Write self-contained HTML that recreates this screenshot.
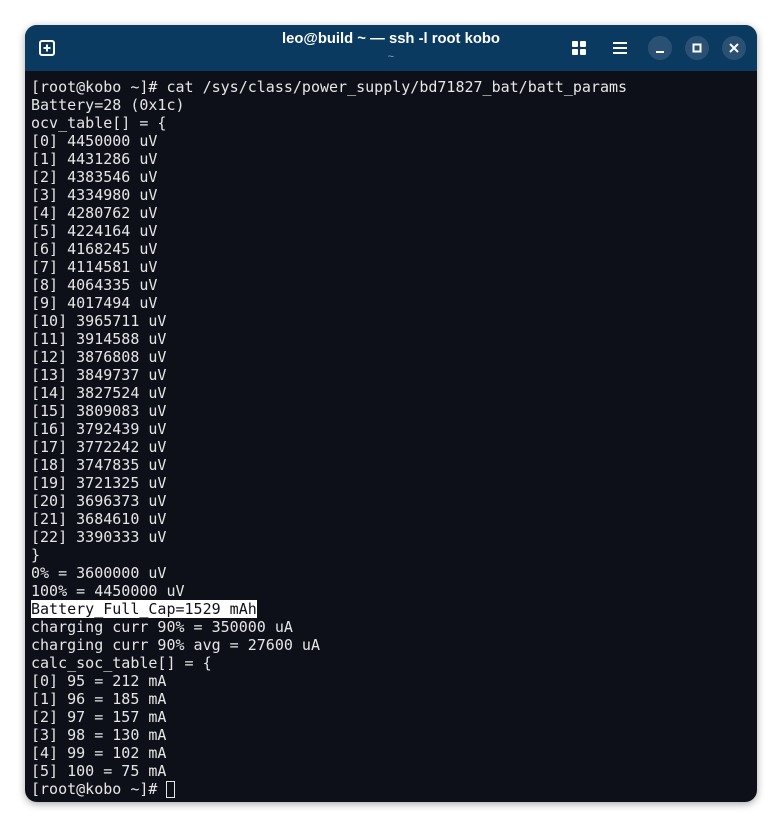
<!DOCTYPE html>
<html><head><style>
body{margin:0;width:782px;height:827px;background:#fff;position:relative;overflow:hidden}
.win{position:absolute;left:25px;top:25px;width:732px;height:777px;border-radius:12px;overflow:hidden;background:#0e1019;box-shadow:0 2px 8px rgba(0,0,0,.35)}
.tb{position:absolute;left:0;top:0;width:732px;height:46px;background:#0b3a61}
.title{position:absolute;left:0;right:0;top:6px;text-align:center;color:#fff;font:bold 14.8px "Liberation Sans",sans-serif}
.sub{position:absolute;left:0;right:0;top:26px;text-align:center;color:#8aa3bb;font:11px "Liberation Sans",sans-serif}
pre{position:absolute;left:6px;top:53px;margin:0;font:15px/18px "DejaVu Sans Mono",monospace;color:#e6e6e6}
.hl{background:#fff;color:#0e1019}
.cur{display:inline-block;width:9px;height:17px;border:1px solid #e6e6e6;box-sizing:border-box;vertical-align:-4px}
.cb{position:absolute;top:11px;width:24px;height:24px;border-radius:50%;background:#2a5174}
</style></head><body>
<div class="win">
<div class="tb">
<svg style="position:absolute;left:14px;top:15px" width="16" height="16"><rect x="1" y="1" width="14" height="14" rx="2" fill="none" stroke="#fff" stroke-width="2"/><path d="M8 4.5v7M4.5 8h7" stroke="#fff" stroke-width="2"/></svg>
<div class="title">leo@build ~ — ssh -l root kobo</div>
<div class="sub">~</div>
<svg style="position:absolute;left:547px;top:16px" width="14" height="14"><rect x="0" y="0" width="6" height="6" rx="1" fill="#fff"/><rect x="8" y="0" width="6" height="6" rx="1" fill="#fff"/><rect x="0" y="8" width="6" height="6" rx="1" fill="#fff"/><rect x="8" y="8" width="6" height="6" rx="1" fill="#fff"/></svg>
<svg style="position:absolute;left:588px;top:17px" width="14" height="12"><path d="M0 1h14M0 6h14M0 11h14" stroke="#fff" stroke-width="2"/></svg>
<div class="cb" style="left:623px"><svg width="24" height="24"><path d="M8 16h8" stroke="#fff" stroke-width="2"/></svg></div>
<div class="cb" style="left:660px"><svg width="24" height="24"><rect x="8.5" y="8.5" width="7" height="7" fill="none" stroke="#fff" stroke-width="2"/></svg></div>
<div class="cb" style="left:697px"><svg width="24" height="24"><path d="M8 8l8 8M16 8l-8 8" stroke="#fff" stroke-width="2"/></svg></div>
</div>
<pre>[root@kobo ~]# cat /sys/class/power_supply/bd71827_bat/batt_params
Battery=28 (0x1c)
ocv_table[] = {
[0] 4450000 uV
[1] 4431286 uV
[2] 4383546 uV
[3] 4334980 uV
[4] 4280762 uV
[5] 4224164 uV
[6] 4168245 uV
[7] 4114581 uV
[8] 4064335 uV
[9] 4017494 uV
[10] 3965711 uV
[11] 3914588 uV
[12] 3876808 uV
[13] 3849737 uV
[14] 3827524 uV
[15] 3809083 uV
[16] 3792439 uV
[17] 3772242 uV
[18] 3747835 uV
[19] 3721325 uV
[20] 3696373 uV
[21] 3684610 uV
[22] 3390333 uV
}
0% = 3600000 uV
100% = 4450000 uV
<span class="hl">Battery_Full_Cap=1529 mAh</span>
charging curr 90% = 350000 uA
charging curr 90% avg = 27600 uA
calc_soc_table[] = {
[0] 95 = 212 mA
[1] 96 = 185 mA
[2] 97 = 157 mA
[3] 98 = 130 mA
[4] 99 = 102 mA
[5] 100 = 75 mA
[root@kobo ~]# <span class="cur"></span></pre>
</div>
</body></html>
